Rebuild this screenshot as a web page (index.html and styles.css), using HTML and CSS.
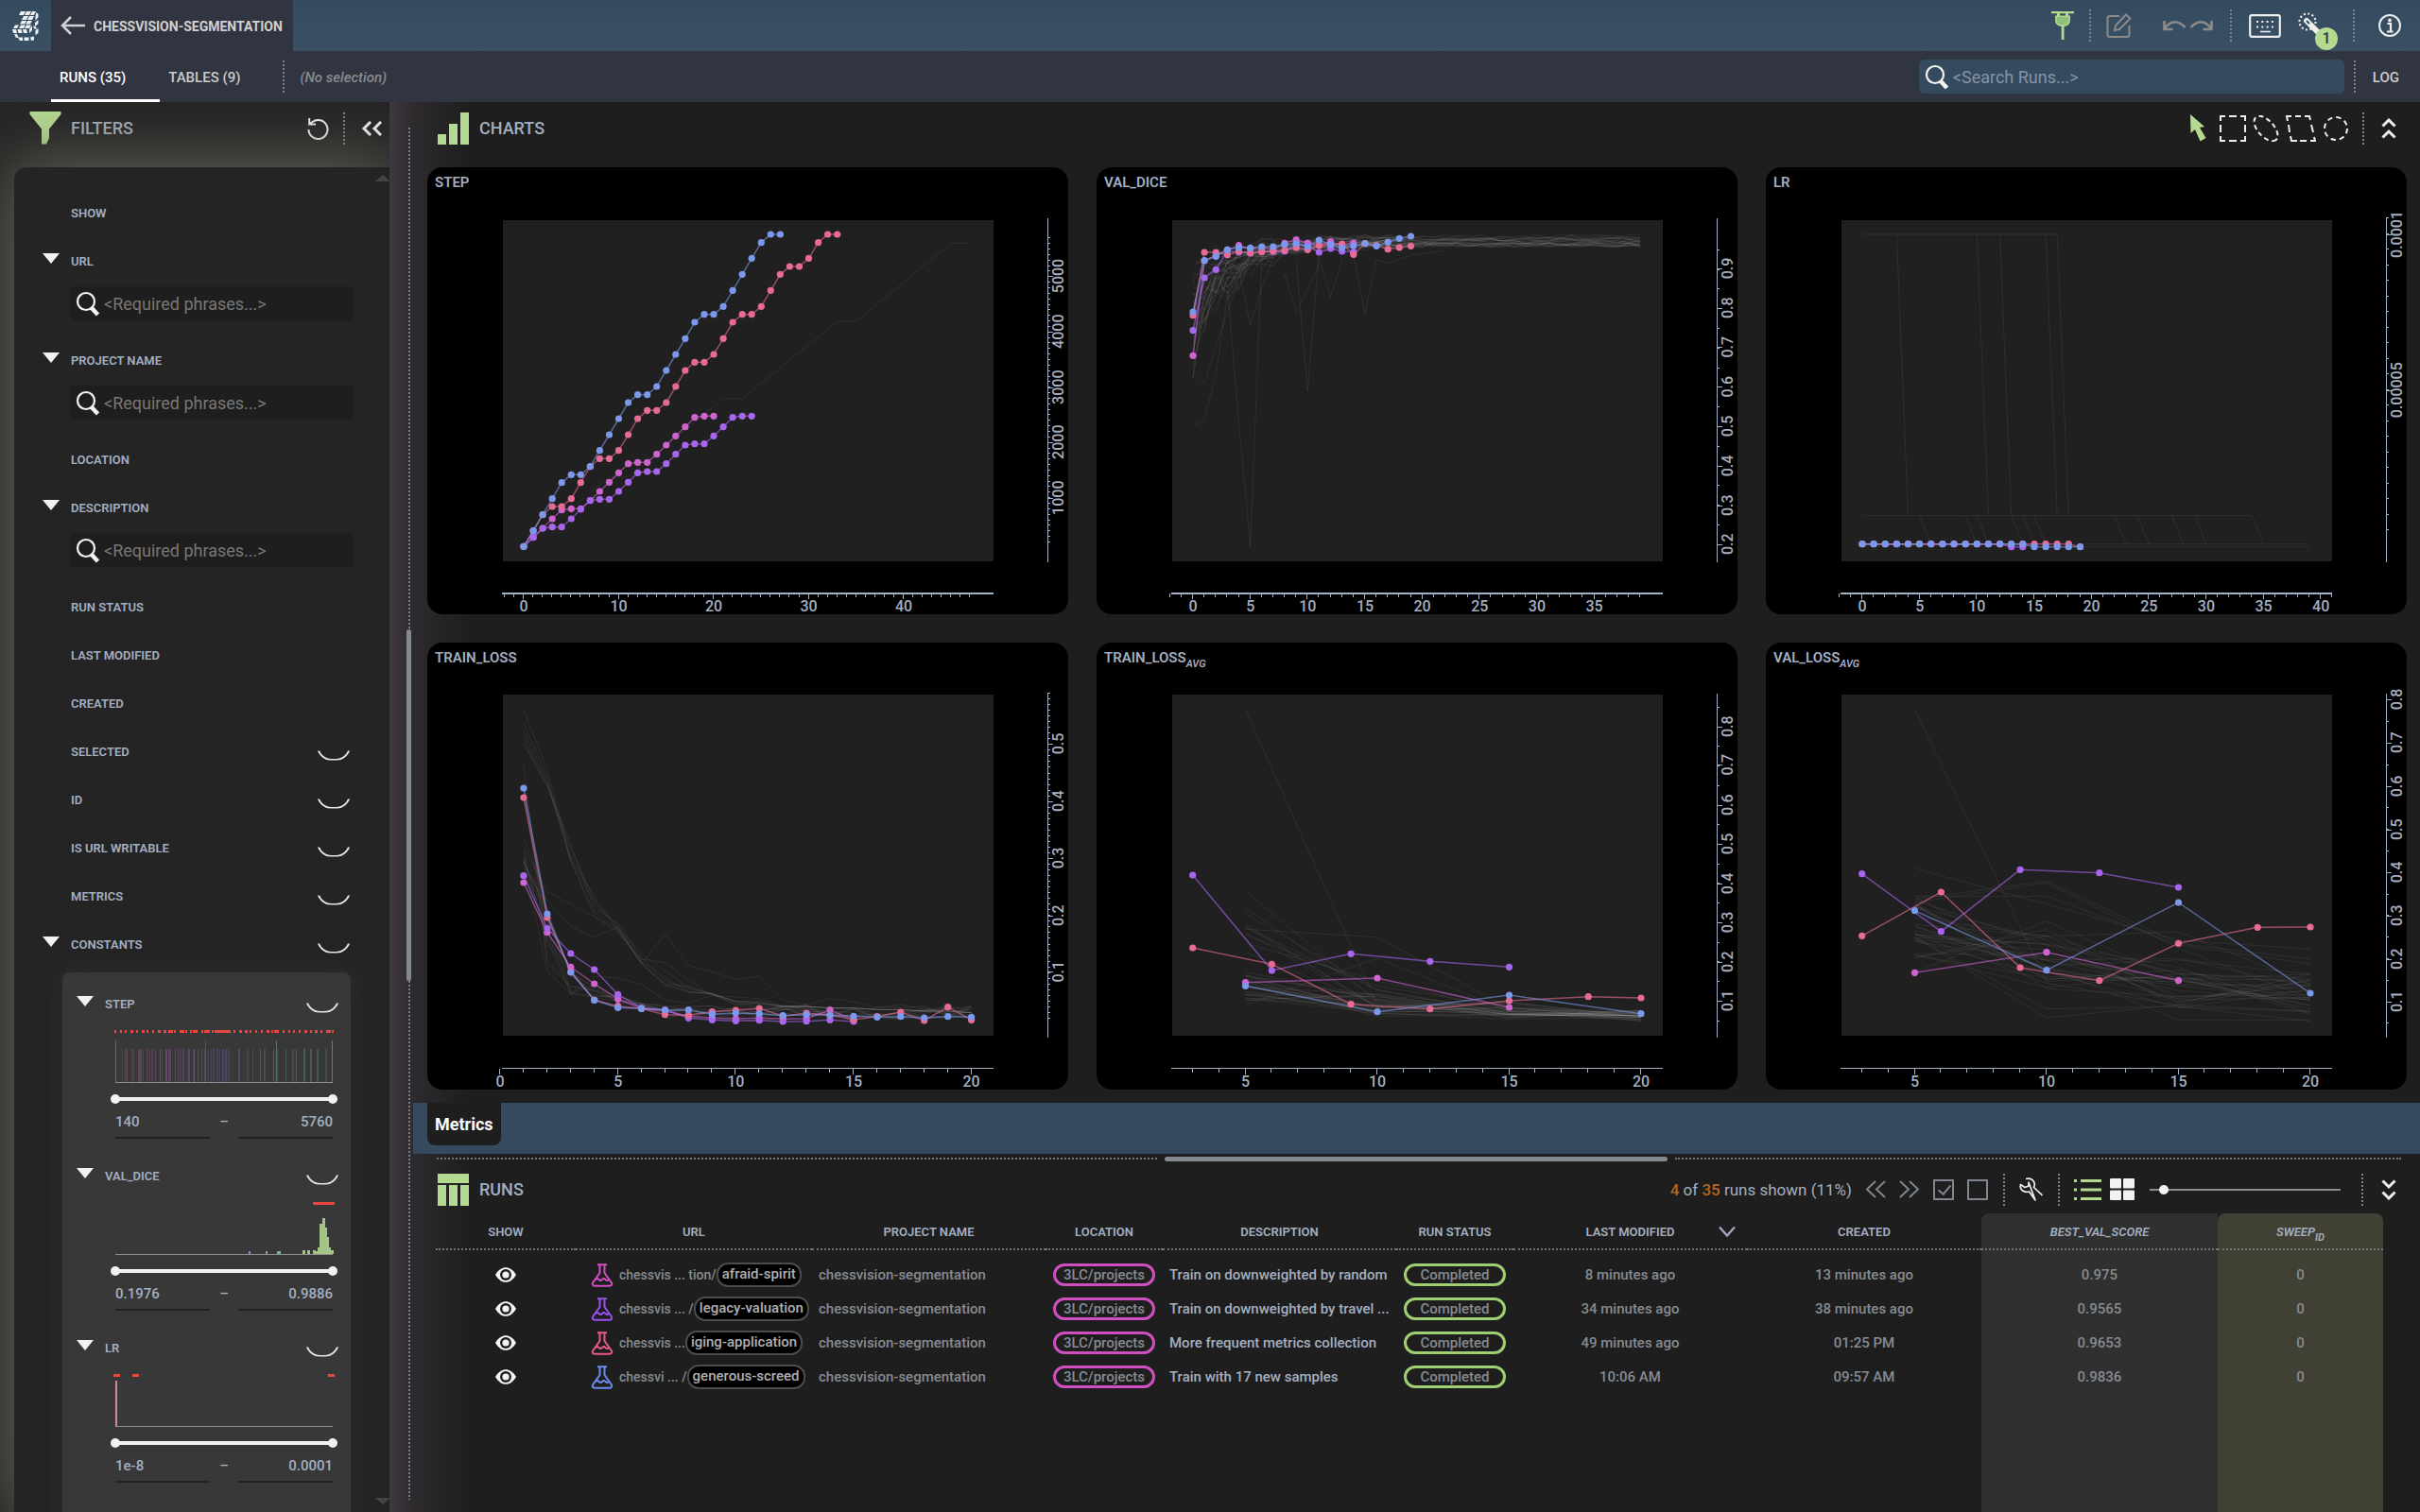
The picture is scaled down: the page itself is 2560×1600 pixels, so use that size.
FILE: index.html
```html
<!DOCTYPE html>
<html lang="en">
<head>
<meta charset="utf-8">
<title>chessvision-segmentation</title>
<link rel="stylesheet" href="styles.css">
</head>
<body>
<svg class="defs" aria-hidden="true">
  <symbol id="i-search" viewBox="0 0 26 27"><circle cx="11" cy="11" r="9" fill="none" stroke="currentColor" stroke-width="2.200"/><path d="M17 18l6.500 7" stroke="currentColor" stroke-width="4.500"/></symbol>
  <symbol id="i-eye" viewBox="0 0 24 18"><path d="M1 9C4.500 3 8.500 1.200 12 1.200S19.500 3 23 9c-3.500 6-7.500 7.800-11 7.800S4.500 15 1 9z" fill="#f4f4f4"/><circle cx="12" cy="9" r="6" fill="#1e1e1e"/><circle cx="12" cy="9" r="3.600" fill="#f4f4f4"/></symbol>
  <symbol id="i-flask" viewBox="0 0 24 25"><path d="M7 1.200h10M9.500 1v9L2 20.500Q1 23.500 4 23.800h16q3-.3 2-3.300L14.500 10V1M5 17q1.700-1.800 3.500 0t3.500 0t3.500 0t3.500 0" fill="none" stroke="currentColor" stroke-width="2"/></symbol>
</svg>

<header class="topbar">
  <a class="logo" href="#" aria-label="Home">
    <svg width="28" height="31" viewBox="0 0 28 31" fill="#eef1f4">
      <path d="M9 0h5l-2 4H7zM15 0h5l-2 4h-5zM21 0h4l-2 4h-4zM12 5h5l-2 4h-5zM18 5h5l-2 4h-5zM10 10h5l-2 3.500H8zM16 10h5l-2 3.500h-5zM3 14.500h4L5 18H1zM9 14.500h5L12 18H7zM15 14.500h5L18 18h-5zM0 19h4l1 4H1zM5.500 19h4l1 4h-4zM11 19h4l1 4h-4zM25.500 1l2 2v3l-3 4V5zM24 12l3.500-3v4L24 16zM18 19l3-4v5l-3 3zM2 24l3 0 1.500 4H4zM6 27.500h5V31H8zM12.500 27.500h5V31h-5zM19 27.500l4-1v4L20 31zM24.500 20l3-2v5l-3 2zM22.500 15l3 2v2l-3-1z"/>
    </svg>
  </a>
  <a class="project-tab" href="#">
    <svg width="26" height="20" viewBox="0 0 26 20" fill="none" stroke="#d0d0d0" stroke-width="2.600"><path d="M26 10H2M11 1L2 10l9 9"/></svg>
    <span>CHESSVISION-SEGMENTATION</span>
  </a>
  <div class="top-actions">
    <button class="icon" aria-label="Connection"><svg width="24" height="31" viewBox="0 0 24 31" fill="#b4d990"><path d="M0 0h24v2.200H0zM6 2h3v3H6zM15 2h3v3h-3zM4 4.500h16V9q0 6-6.500 7v14h-2.800V16Q4 15 4 9z"/><path d="M5.500 6h13v3q0 5-6.500 5.500Q5.500 14 5.500 9z" fill="#8fc07a"/></svg></button>
    <span class="sep"></span>
    <button class="icon" aria-label="Edit"><svg width="27" height="27" viewBox="0 0 27 27" fill="none" stroke="#8b8b8b" stroke-width="2"><path d="M14 3H4Q1.500 3 1.500 5.500v17Q1.500 25 4 25h18q2.500 0 2.500-2.500V13M9 18l1-5L21 1.500l4.500 4L14 17z"/></svg></button>
    <span class="pair">
      <button class="icon" aria-label="Undo"><svg width="25" height="14" viewBox="0 0 25 14" fill="none" stroke="#8b8b8b" stroke-width="2.600"><path d="M1.500 2v9h9M2 10Q12-3 23.500 9"/></svg></button>
      <button class="icon" aria-label="Redo"><svg width="25" height="14" viewBox="0 0 25 14" fill="none" stroke="#8b8b8b" stroke-width="2.600"><path d="M23.500 2v9h-9M23 10Q13-3 1.500 9"/></svg></button>
    </span>
    <span class="sep"></span>
    <button class="icon keys" aria-label="Keyboard"><svg width="34" height="25" viewBox="0 0 34 25"><rect x="1.200" y="1.200" width="31.600" height="22.600" rx="2" fill="none" stroke="#eee" stroke-width="2.200"/><path d="M8 8h18M8 13.500h18" stroke="#eee" stroke-width="2" stroke-dasharray="2 3.300"/><path d="M12 18.500h11" stroke="#eee" stroke-width="1.600"/></svg></button>
    <button class="icon wand" aria-label="Notices">
      <svg width="28" height="28" viewBox="0 0 28 28"><circle cx="10" cy="10" r="8.500" fill="none" stroke="#eee" stroke-width="2.200" stroke-dasharray="2 2.450"/><path d="M9 9l15 15" stroke="#eee" stroke-width="6" stroke-linecap="round"/><path d="M9.500 9.500l2 2" stroke="#3b5064" stroke-width="2" stroke-linecap="round"/></svg>
      <span class="badge">1</span>
    </button>
    <span class="sep"></span>
    <button class="icon info" aria-label="Info"><svg width="26" height="26" viewBox="0 0 26 26"><circle cx="13" cy="13" r="11" fill="none" stroke="#eee" stroke-width="2"/><circle cx="13" cy="7.500" r="1.900" fill="#eee"/><path d="M10.500 11h3.500v8M10 19.500h6.500" fill="none" stroke="#eee" stroke-width="2.200"/></svg></button>
  </div>
</header>

<nav class="subbar">
  <a class="tab active" href="#">RUNS (35)</a>
  <a class="tab" href="#">TABLES (9)</a>
  <span class="sep"></span>
  <em class="no-selection">(No selection)</em>
  <label class="search search-runs"><svg width="26" height="27"><use href="#i-search"/></svg><input type="text" placeholder="&lt;Search Runs...&gt;" aria-label="Search runs"></label>
  <span class="sep"></span>
  <a class="log" href="#">LOG</a>
</nav>

<div class="workspace">
  <aside class="filters">
    <div class="head">
      <svg width="34" height="35" viewBox="0 0 34 35"><path d="M.5 0h33v3L21 18.500V28l-3 6.500h-5v-16L.5 3z" fill="#b4d990"/></svg>
      <h2>FILTERS</h2>
      <button class="icon push" aria-label="Reset filters"><svg width="24" height="24" viewBox="0 0 24 24" fill="none" stroke="#eee" stroke-width="2"><path d="M1.500 13a10 10 0 1 0 4-8L2.500 7M2.200 1v6.500H9"/></svg></button>
      <span class="sep"></span>
      <button class="icon" aria-label="Collapse filters"><svg width="22" height="16" viewBox="0 0 22 16" fill="none" stroke="#eee" stroke-width="3"><path d="M10 1L3 8l7 7M21 1l-7 7 7 7"/></svg></button>
    </div>
    <div class="panel">
      <span class="scroll-up"></span><span class="scroll-down"></span>
      <div class="row">SHOW</div>
      <div class="row open">URL</div>
      <label class="search"><svg width="26" height="27"><use href="#i-search"/></svg><input type="text" placeholder="&lt;Required phrases...&gt;" aria-label="URL phrases"></label>
      <div class="row open">PROJECT NAME</div>
      <label class="search"><svg width="26" height="27"><use href="#i-search"/></svg><input type="text" placeholder="&lt;Required phrases...&gt;" aria-label="Project name phrases"></label>
      <div class="row">LOCATION</div>
      <div class="row open">DESCRIPTION</div>
      <label class="search"><svg width="26" height="27"><use href="#i-search"/></svg><input type="text" placeholder="&lt;Required phrases...&gt;" aria-label="Description phrases"></label>
      <div class="row">RUN STATUS</div>
      <div class="row">LAST MODIFIED</div>
      <div class="row">CREATED</div>
      <div class="row hid">SELECTED</div>
      <div class="row hid">ID</div>
      <div class="row hid">IS URL WRITABLE</div>
      <div class="row hid">METRICS</div>
      <div class="row open hid">CONSTANTS</div>
      <div class="constants">
        <section>
          <div class="row open hid">STEP</div>
          <svg class="hist" id="hist-step" viewBox="0 0 230 60"></svg>
          <div class="range"><input type="range" min="140" max="5760" value="140" aria-label="Step from"><input type="range" min="140" max="5760" value="5760" aria-label="Step to"></div>
          <div class="limits"><input type="text" value="140" aria-label="Step minimum"><span>–</span><input type="text" value="5760" aria-label="Step maximum"></div>
        </section>
        <section>
          <div class="row open hid">VAL_DICE</div>
          <svg class="hist" id="hist-dice" viewBox="0 0 230 60"></svg>
          <div class="range"><input type="range" min="0" max="1" step="any" value="0" aria-label="Dice from"><input type="range" min="0" max="1" step="any" value="1" aria-label="Dice to"></div>
          <div class="limits"><input type="text" value="0.1976" aria-label="Dice minimum"><span>–</span><input type="text" value="0.9886" aria-label="Dice maximum"></div>
        </section>
        <section>
          <div class="row open hid">LR</div>
          <svg class="hist" id="hist-lr" viewBox="0 0 230 60"></svg>
          <div class="range"><input type="range" min="0" max="1" step="any" value="0" aria-label="LR from"><input type="range" min="0" max="1" step="any" value="1" aria-label="LR to"></div>
          <div class="limits"><input type="text" value="1e-8" aria-label="LR minimum"><span>–</span><input type="text" value="0.0001" aria-label="LR maximum"></div>
        </section>
        <section><div class="row open"></div></section>
      </div>
    </div>
  </aside>

  <div class="splitter-v"><span class="grip"></span></div>

  <main class="content">
    <div class="head">
      <svg width="33" height="34" viewBox="0 0 33 34" fill="#b4d990"><path d="M0 23h9v11H0zM12 12h9v22h-9zM24 0h9v34h-9z"/></svg>
      <h2>CHARTS</h2>
      <div class="tools push">
        <button class="icon pointer" aria-label="Pointer"><svg width="20" height="29" viewBox="0 0 20 29"><path d="M1 0l15 13-5 1 6.500 11-6 3.500L6 16l-4.500 4z" fill="#b4d990"/></svg></button>
        <button class="icon" aria-label="Rectangle select"><svg width="28" height="28" viewBox="0 0 28 28" fill="none" stroke="#eee" stroke-width="2"><path d="M1 6V1h5M22 1h5v5M27 22v5h-5M6 27H1v-5M10 1h8M10 27h8M1 10v8M27 10v8"/></svg></button>
        <button class="icon" aria-label="Lasso select"><svg width="28" height="28" viewBox="0 0 28 28" fill="none" stroke="#eee" stroke-width="2" stroke-dasharray="5 3.500"><ellipse cx="14" cy="14" rx="16" ry="8.500" transform="rotate(48 14 14)"/></svg></button>
        <button class="icon" aria-label="Polygon select"><svg width="32" height="28" viewBox="0 0 32 28" fill="none" stroke="#eee" stroke-width="2"><path d="M2 6L1 1h5M20 1h5l1 4M30 23l1 4h-5M12 27H6l-1-5M10 1h6M15 27h7M3 10l1 8M27 10l2 8"/></svg></button>
        <button class="icon" aria-label="Circle select"><svg width="28" height="28" viewBox="0 0 28 28" fill="none" stroke="#eee" stroke-width="2"><circle cx="14" cy="14" r="12" stroke-dasharray="5.400 4"/></svg></button>
        <span class="sep"></span>
        <button class="icon fold" aria-label="Collapse charts"><svg width="16" height="22" viewBox="0 0 16 22" fill="none" stroke="#eee" stroke-width="3"><path d="M1.500 8.500L8 2l6.500 6.500M1.500 20.500L8 14l6.500 6.500"/></svg></button>
      </div>
    </div>

    <div class="charts">
      <article class="chart"><h3>STEP</h3><svg viewBox="0 34 678 439" data-chart="step"></svg></article>
      <article class="chart"><h3>VAL_DICE</h3><svg viewBox="0 34 678 439" data-chart="dice"></svg></article>
      <article class="chart"><h3>LR</h3><svg viewBox="0 34 678 439" data-chart="lr"></svg></article>
      <article class="chart"><h3>TRAIN_LOSS</h3><svg viewBox="0 34 678 439" data-chart="train"></svg></article>
      <article class="chart"><h3>TRAIN_LOSS<sub>AVG</sub></h3><svg viewBox="0 34 678 439" data-chart="trainAvg"></svg></article>
      <article class="chart"><h3>VAL_LOSS<sub>AVG</sub></h3><svg viewBox="0 34 678 439" data-chart="valAvg"></svg></article>
    </div>

    <div class="sheets"><button class="sheet">Metrics</button></div>
    <div class="splitter-h"><span class="grip"></span></div>

    <div class="head runs-head">
      <svg width="33" height="34" viewBox="0 0 33 34" fill="#b4d990"><path d="M0 0h33v10H0zM0 12h9v22H0zM12 12h9v22h-9zM24 12h9v22h-9z"/></svg>
      <h2>RUNS</h2>
      <div class="runs-tools push">
        <span class="count"><b>4</b> of <b>35</b> runs shown (11%)</span>
        <button class="icon" aria-label="Previous"><svg width="22" height="19" viewBox="0 0 22 19" fill="none" stroke="#7f868f" stroke-width="2"><path d="M11 1L2 9.500 11 18M21 1l-9 8.500 9 8.500"/></svg></button>
        <button class="icon" aria-label="Next"><svg width="22" height="19" viewBox="0 0 22 19" fill="none" stroke="#7f868f" stroke-width="2"><path d="M1 1l9 8.500L1 18M11 1l9 8.500L11 18"/></svg></button>
        <input class="box" type="checkbox" checked aria-label="Select all">
        <input class="box" type="checkbox" aria-label="Select none">
        <span class="sep"></span>
        <button class="icon" aria-label="Settings"><svg width="25" height="25" viewBox="0 0 25 25" fill="none" stroke="#eee" stroke-width="1.700" stroke-linejoin="round"><path d="M7 1.500q6-1.500 8.500 3 1.500 3 0 6l9 8.500M17 24l-6.500-9q-4.500 1-7.500-1.500Q.5 11 1.500 7.500l4.500 3 4-1.500V5z"/></svg></button>
        <span class="sep"></span>
        <span class="views">
          <button class="icon" aria-label="List view"><svg width="29" height="24" viewBox="0 0 29 24" fill="#b4d990"><path d="M0 1h3v3H0zM7 1h22v3H7zM0 10.500h3v3H0zM7 10.500h22v3H7zM0 20h3v3H0zM7 20h22v3H7z"/></svg></button>
          <button class="icon" aria-label="Grid view"><svg width="26" height="23" viewBox="0 0 26 23" fill="#f2f2f2"><rect width="12" height="10.500" rx="1"/><rect x="14" width="12" height="10.500" rx="1"/><rect y="12.500" width="12" height="10.500" rx="1"/><rect x="14" y="12.500" width="12" height="10.500" rx="1"/></svg></button>
        </span>
        <input class="zoom" type="range" min="0" max="100" value="5" aria-label="Row size">
        <span class="sep"></span>
        <button class="icon fold" aria-label="Collapse runs"><svg width="16" height="22" viewBox="0 0 16 22" fill="none" stroke="#eee" stroke-width="3"><path d="M1.500 1.500L8 8l6.500-6.500M1.500 13.500L8 20l6.500-6.500"/></svg></button>
      </div>
    </div>

    <div class="table-wrap">
      <table class="runs">
        <colgroup><col class="w148"><col class="w250"><col class="w247"><col class="w124"><col class="w247"><col class="w124"><col class="w247"><col class="w248"><col class="w250"><col class="w175"></colgroup>
        <thead><tr>
          <th>SHOW</th><th>URL</th><th>PROJECT NAME</th><th>LOCATION</th><th>DESCRIPTION</th><th>RUN STATUS</th>
          <th class="sorted">LAST MODIFIED<svg width="18" height="13" viewBox="0 0 18 13" fill="none" stroke="#a3afc0" stroke-width="2.200"><path d="M1 1.500l8 9 8-9"/></svg></th>
          <th>CREATED</th><th class="score">BEST_VAL_SCORE</th><th class="sweep">SWEEP<sub>ID</sub></th>
        </tr></thead>
        <tbody>
          <tr class="space"><td colspan="8"></td><td class="score"></td><td class="sweep"></td></tr>
          <tr><td><button class="icon" aria-label="Hide run"><svg width="24" height="18"><use href="#i-eye"/></svg></button></td>
            <td><div class="url"><svg class="flask c-magenta" width="24" height="25"><use href="#i-flask"/></svg><span>chessvis ... tion/</span><a class="name" href="#">afraid-spirit</a></div></td>
            <td class="left">chessvision-segmentation</td><td><span class="pill loc">3LC/projects</span></td><td class="left desc">Train on downweighted by random</td><td><span class="pill done">Completed</span></td><td>8 minutes ago</td><td>13 minutes ago</td><td class="score">0.975</td><td class="sweep">0</td></tr>
          <tr><td><button class="icon" aria-label="Hide run"><svg width="24" height="18"><use href="#i-eye"/></svg></button></td>
            <td><div class="url"><svg class="flask c-violet" width="24" height="25"><use href="#i-flask"/></svg><span>chessvis ... /</span><a class="name" href="#">legacy-valuation</a></div></td>
            <td class="left">chessvision-segmentation</td><td><span class="pill loc">3LC/projects</span></td><td class="left desc">Train on downweighted by travel ...</td><td><span class="pill done">Completed</span></td><td>34 minutes ago</td><td>38 minutes ago</td><td class="score">0.9565</td><td class="sweep">0</td></tr>
          <tr><td><button class="icon" aria-label="Hide run"><svg width="24" height="18"><use href="#i-eye"/></svg></button></td>
            <td><div class="url"><svg class="flask c-pink" width="24" height="25"><use href="#i-flask"/></svg><span>chessvis ...</span><a class="name" href="#">iging-application</a></div></td>
            <td class="left">chessvision-segmentation</td><td><span class="pill loc">3LC/projects</span></td><td class="left desc">More frequent metrics collection</td><td><span class="pill done">Completed</span></td><td>49 minutes ago</td><td>01:25 PM</td><td class="score">0.9653</td><td class="sweep">0</td></tr>
          <tr><td><button class="icon" aria-label="Hide run"><svg width="24" height="18"><use href="#i-eye"/></svg></button></td>
            <td><div class="url"><svg class="flask c-blue" width="24" height="25"><use href="#i-flask"/></svg><span>chessvi ... /</span><a class="name" href="#">generous-screed</a></div></td>
            <td class="left">chessvision-segmentation</td><td><span class="pill loc">3LC/projects</span></td><td class="left desc">Train with 17 new samples</td><td><span class="pill done">Completed</span></td><td>10:06 AM</td><td>09:57 AM</td><td class="score">0.9836</td><td class="sweep">0</td></tr>
          <tr class="fill"><td colspan="8"></td><td class="score"></td><td class="sweep"></td></tr>
        </tbody>
      </table>
    </div>
  </main>
</div>
<script src="charts.js"></script>
</body>
</html>
```
FILE: styles.css
```css
* { box-sizing: border-box; }
body {
  margin: 0;
  height: 100vh;
  display: flex;
  flex-direction: column;
  overflow: hidden;
  background: #1e1e1e;
  color: #a3afc0;
  font: 500 15px/20px Roboto, "Liberation Sans", sans-serif;
}
.defs { position: absolute; width: 0; height: 0; }
a { color: inherit; text-decoration: none; }
button, input { font: inherit; color: inherit; }
svg { display: block; flex: none; }
.icon { display: block; flex: none; padding: 0; border: 0; background: none; }
.push { margin-left: auto; }
.sep { flex: none; height: 34px; border-left: 2px dotted #7b828b; }

.topbar {
  flex: none;
  display: flex;
  height: 54px;
  background: linear-gradient(#344a5f, #3a5063);
}
.logo { width: 54px; display: grid; place-items: center; }
.project-tab {
  display: flex;
  align-items: center;
  gap: 9px;
  padding: 0 11px 0 10px;
  background: #303541;
  color: #d0d0d0;
  font-size: 14px;
  font-weight: 700;
}
.project-tab span { padding-top: 2px; }
.top-actions { margin-left: auto; display: flex; align-items: center; gap: 16px; padding-right: 19px; }
.pair { display: flex; gap: 3px; padding: 0 2px 0 17px; }
.keys { margin: 0 2px; }
.wand { position: relative; width: 42px; }
.badge {
  position: absolute;
  right: 0;
  top: 16px;
  width: 24px;
  height: 24px;
  border-radius: 12px;
  background: #b4d990;
  color: #303541;
  font-size: 16px;
  line-height: 24px;
}
.info { margin-left: 8px; }

.subbar { flex: none; display: flex; align-items: center; height: 54px; padding: 0 22px 0 54px; background: #303541; }
.tab { display: flex; align-items: center; height: 54px; padding: 5px 36px 0 9px; color: #ccc; border-bottom: 3px solid transparent; }
.tab + .tab { padding-right: 45px; }
.tab.active { color: #fff; border-color: #fff; }
.no-selection { margin-left: 16px; padding-top: 2px; color: #8b8b8b; }

.search {
  display: flex;
  align-items: center;
  gap: 4px;
  height: 36px;
  padding-left: 6px;
  border-radius: 6px;
  background: #1e1e1e;
  color: #f4f4f4;
}
.search input { flex: 1; min-width: 0; border: 0; padding: 2px 0 0; background: none; font-size: 18px; font-weight: 400; outline: 0; }
.search input::placeholder { color: #777; opacity: 1; }
.search-runs { width: 450px; margin: 0 10px 0 auto; background: #354a5f; }
.search-runs input::placeholder { color: #8394a6; }
.log { margin-left: 18px; padding-top: 2px; color: #ccc; }

.workspace { flex: 1; min-height: 0; display: flex; background: #1e1e1e; }
h2 { margin: 0; font-size: 18px; font-weight: 500; line-height: 24px; }
.head { flex: none; display: flex; align-items: center; height: 69px; gap: 11px; }

.filters { flex: none; width: 412px; display: flex; flex-direction: column; overflow: hidden; background: #252525; }
.filters .head { padding: 0 8px 14px 31px; gap: 10px; }
.filters .head .sep { margin: 0 7px 0 4px; }
.panel {
  position: relative;
  flex: 1;
  min-height: 0;
  margin-left: 15px;
  padding: 23px 37px 0 30px;
  border-radius: 14px 0 0 0;
  background: #242424;
  box-shadow: 0 0 70px 4px #66665a;
}
.scroll-up, .scroll-down { position: absolute; right: -1px; border: 8px solid transparent; }
.scroll-up { top: 0; border-bottom: 7px solid #454545; }
.scroll-down { bottom: 0; border-top: 7px solid #454545; }
.row {
  display: flex;
  align-items: center;
  height: 51px;
  padding-left: 30px;
  font-size: 13px;
  font-weight: 600;
}
.row.open::before {
  content: "";
  width: 18px;
  height: 11px;
  margin: 0 12px 6px -30px;
  background: #f2f2f2;
  clip-path: polygon(0 0, 100% 0, 50% 100%);
}
.row.hid::after {
  content: "";
  width: 32px;
  height: 32px;
  margin: -18px 4px 0 auto;
  border-radius: 16px;
  border: 2px solid #e4e4e4;
  clip-path: inset(26px 0 0 0);
}
.panel > .search { margin: 1px 0 17px 29px; }
.constants { margin: 4px 4px 0 21px; height: 700px; padding: 8px 16px 0 15px; border-radius: 8px; background: #383838; box-shadow: 0 0 24px #2a3036; }
.constants .row.hid::after { margin-right: -4px; }
.constants section { padding-bottom: 14px; }
.hist { width: 230px; height: 60px; margin-left: 41px; overflow: visible; }
.range { position: relative; height: 30px; margin: 0 -2px 0 36px; }
.range::before { content: ""; position: absolute; left: 6px; right: 6px; top: 13px; height: 4px; background: #f2f2f2; }
.range input { position: absolute; inset: 0; width: 100%; height: 30px; margin: 0; appearance: none; background: none; pointer-events: none; }
.range input::-webkit-slider-thumb { appearance: none; width: 10px; height: 10px; border-radius: 5px; background: #f2f2f2; pointer-events: auto; }
.limits { display: flex; justify-content: space-between; height: 27px; margin: 0 3px 0 41px; line-height: 18px; }
.limits input { width: 100px; padding: 0 0 8px; border: 0; border-bottom: 2px solid #222; background: none; font-size: 15px; outline: 0; }
.limits input:last-child { text-align: right; }

.splitter-v {
  flex: none;
  display: flex;
  flex-direction: column;
  align-items: flex-start;
  width: 25px;
  padding: 27px 0 13px 18px;
  background: linear-gradient(90deg, #40383f, #2d2a2e);
}
.splitter-v::before, .splitter-v::after { content: ""; flex: 532 1 0; width: 5px; background: repeating-linear-gradient(#7c7c82 0 2px, transparent 2px 4px) 2px 0 / 2px 100% no-repeat; }
.splitter-v::after { flex-grow: 550; }
.splitter-v .grip { flex: 373 1 0; width: 5px; border-radius: 3px; background: #84898f; }

.content { flex: 1; min-width: 0; display: flex; flex-direction: column; background: linear-gradient(90deg, #2d2a2e, #1e1e1e 60px); }
.content > .head { padding: 0 25px 14px 26px; }
.tools { display: flex; align-items: center; gap: 7px; }
.tools .sep { margin: 0 7px; }
.pointer { margin-right: 5px; }
.charts { flex: none; display: grid; grid-template-columns: repeat(3, 1fr); gap: 30px; padding: 0 14px 14px 15px; }
.chart { min-width: 0; border-radius: 16px; background: #000; }
.chart h3 { margin: 0; height: 34px; padding: 6px 0 0 8px; font-size: 15px; font-weight: 600; line-height: 20px; }
.chart sub, .runs sub { font-size: 11px; font-style: italic; line-height: 0; vertical-align: -5px; }
.chart svg { width: 100%; }
.chart text { fill: #a3afc0; font-size: 16px; text-anchor: middle; }
.plot { fill: #202020; }
.axis { fill: none; stroke: #a3b1c4; }
.axis-bold { stroke-width: 2; }
.ghost { fill: none; stroke: #fff; stroke-opacity: .065; }
.trace { fill: none; stroke-width: 1.5; stroke-opacity: .6; }

.sheets { flex: none; height: 54px; padding-left: 15px; background: #354a5f; }
.sheet { display: block; height: 45px; padding: 0 8px; border: 0; border-radius: 0 0 8px 8px; background: #1e1e1e; color: #fff; font-size: 18px; font-weight: 700; }
.splitter-h { flex: none; display: flex; height: 12px; padding: 2px 20px 4px 25px; gap: 8px; align-items: center; }
.splitter-h::before, .splitter-h::after { content: ""; flex: 759 1 0; border-top: 2px dotted #77777c; }
.splitter-h::after { flex-grow: 765; }
.splitter-h .grip { flex: 531 1 0; height: 5px; border-radius: 3px; background: #84898f; }
.content > .runs-head { height: 51px; padding-bottom: 0; }
.runs-tools { display: flex; align-items: center; gap: 14px; }
.count { font-size: 17px; font-weight: 400; }
.count b { color: #b5651d; font-weight: 500; }
.box { appearance: none; flex: none; width: 22px; height: 22px; margin: 0; border: 2px solid #7f868f; }
.box:checked::before { content: ""; display: block; width: 6px; height: 11px; margin: 1px 0 0 6px; border: solid #7f868f; border-width: 0 2px 2px 0; transform: rotate(40deg); }
.runs-tools .sep { margin: 0 1px 0 2px; }
.views { display: flex; align-items: center; gap: 9px; }
.zoom { appearance: none; width: 202px; height: 20px; margin: 0 6px 0 2px; background: linear-gradient(#8c8c8c, #8c8c8c) center / 100% 2px no-repeat; }
.zoom::-webkit-slider-thumb { appearance: none; width: 10px; height: 10px; border-radius: 5px; background: #f4f4f4; }
.fold { margin-left: 4px; }

.table-wrap { flex: 1; min-height: 0; padding: 0 39px 0 24px; }
.runs { width: 100%; height: 100%; table-layout: fixed; border-collapse: collapse; color: #868b92; }
.w148 { width: 148px; } .w250 { width: 250px; } .w247 { width: 247px; } .w124 { width: 124px; } .w248 { width: 248px; } .w175 { width: 175px; }
.runs th { height: 38px; padding: 2px 0 0; border-bottom: 2px dotted #6f7276; color: #a3afc0; font-size: 13px; font-weight: 600; }
.runs td { height: 36px; padding: 0; text-align: center; white-space: nowrap; }
.runs td .icon { margin: 0 auto; }
.runs .left { text-align: left; padding-left: 7px; }
.runs .desc { color: #a3afc0; }
.runs .space td { height: 9px; }
.runs .fill td { height: auto; }
.runs .score { background: #303030; }
.runs .sweep { background: #404034; }
.runs th.score { border-radius: 8px 0 0 0; font-style: italic; }
.runs th.sweep { border-radius: 8px 8px 0 0; font-style: italic; }
.sorted { position: relative; }
.sorted svg { position: absolute; right: 12px; top: 13px; }
.url { display: flex; align-items: center; padding-left: 16px; overflow: hidden; }
.url span { font-size: 14px; }
.flask { margin-right: 6px; }
.c-magenta { color: #cf4fc0; } .c-violet { color: #9b51f0; } .c-pink { color: #e75a83; } .c-blue { color: #6a8cf0; }
.name { height: 26px; padding: 0 4px; border: 2px solid #4c4c4c; border-radius: 12px; background: #000; color: #b0b0b0; line-height: 21px; }
.pill { display: block; width: 108px; height: 24px; margin: 0 auto; border: 3px solid; border-radius: 12px; line-height: 19px; }
.pill.loc { border-color: #cf4fc0; }
.pill.done { border-color: #a0ce72; }
```
FILE: charts.js
```js
const BLUE = '#7b99ec', PINK = '#e76b95', MAGENTA = '#cf63d0', VIOLET = '#a865ee';
const NS = 'http://www.w3.org/2000/svg';

let seed = 7;
const rnd = () => (seed = (seed * 16807) % 2147483647) / 2147483647;

const add = (svg, tag, attrs, text) => {
  const el = document.createElementNS(NS, tag);
  for (const k in attrs) el.setAttribute(k, attrs[k]);
  if (text !== undefined) el.textContent = text;
  svg.appendChild(el);
};
const run = (ys, from = 0) => ys.map((y, i) => [from + i, y]);
const flat = (from, to, y) => Array.from({ length: to - from + 1 }, (_, i) => [from + i, y]);

// Noisy background runs. Heights are in thirds of a pixel, as in the series below.
function diceGhosts() {
  const out = [
    [[0, 843], [1, 823], [2, 680], [3, 430], [4, 350], [6, 300]],
    [[3, 400], [4, 830], [5, 1225], [6, 300]],
    [[9, 320], [10, 733], [11, 290]],
    [[14, 300], [15, 485], [16, 315], [17, 325], [19, 300], [22, 285]],
    [[4, 340], [5, 523], [6, 400], [7, 310]],
    [[11, 310], [12, 433], [13, 315]],
    [[8, 360], [9, 480], [10, 410], [11, 330]],
    [[0, 690], [1, 420], [2, 370]], [[0, 670], [1, 705], [2, 590], [3, 480], [4, 380]],
  ];
  for (let k = 0; k < 32; k++) {
    const start = 350 + rnd() * 320, base = 236 + rnd() * 34, len = k < 24 ? 39 : 18, line = [];
    for (let x = 0; x <= len; x++) {
      const decay = Math.exp(-x / 3);
      const y = base + (start - base) * decay * (0.5 + rnd() * 0.7) + (rnd() - 0.3) * 90 * Math.exp(-x / 8) + (rnd() - 0.5) * 14;
      line.push([x, Math.max(235, y)]);
    }
    out.push(line);
  }
  return out;
}
function trainGhosts() {
  const out = [
    run([650, 850, 930, 965, 933, 1050, 955, 1055, 1075, 1100, 1090, 1165, 1180, 1160, 1170, 1190, 1180, 1195, 1195, 1205], 1),
    run([680, 822, 860, 900, 950, 1035, 1045, 1100, 1150, 1180, 1190, 1195, 1200], 1),
    run([720, 1075, 1145, 1090, 1095, 1115, 1165, 1175, 1150, 1155, 1160, 1185, 1195, 1200, 1205], 1),
  ];
  [243, 285, 310, 330, 345, 350].forEach(s => out.push(run([s, s + 190 - (s - 243) / 2, 670 + rnd() * 60, 810 + rnd() * 90, 920 + rnd() * 50, 1010 + rnd() * 50, 1070 + rnd() * 50, 1120 + rnd() * 20, 1145, 1160 + rnd() * 20, 1165 + rnd() * 25, 1185, 1185, 1190, 1190, 1195, 1195, 1200, 1200, 1205], 1)));
  [415, 470, 480, 700, 710, 720, 725, 730, 740, 690].forEach(s => out.push(run([s, 860 + rnd() * 220, 1060 + rnd() * 90, 1110 + rnd() * 50, 1150 + rnd() * 30, 1165 + rnd() * 30].concat(Array.from({ length: 14 }, () => 1180 + rnd() * 45)), 1)));
  return out;
}
function trainAvgGhosts() {
  const out = [[[5, 243], [10, 1180], [15, 1200], [20, 1215]], [[5, 940], [10, 965], [15, 1190], [20, 1200]], [[5, 1180], [10, 1032], [15, 1200], [20, 1215]]];
  [817, 872, 890, 922, 930, 935, 950, 958, 985, 1012].forEach(s => out.push([[5, s], [10, 1100 + rnd() * 90], [15, 1170 + rnd() * 40], [20, 1200 + rnd() * 30]]));
  for (let k = 0; k < 22; k++) out.push([[5, 1075 + rnd() * 115], [10, 1140 + rnd() * 80], [15, 1185 + rnd() * 40], [20, 1195 + rnd() * 38]]);
  return out;
}
function valAvgGhosts() {
  const out = [
    [[5, 243], [10, 1105], [15, 1090], [20, 1165]], [[5, 747], [10, 860], [15, 975], [20, 1003]],
    [[5, 845], [10, 787], [15, 985], [20, 1035]], [[5, 855], [10, 793], [15, 1000], [20, 1160]],
    [[5, 835], [10, 835], [15, 990], [20, 1050]], [[5, 1075], [10, 914], [15, 1100], [20, 1180]],
    [[5, 965], [10, 1221], [15, 1180], [20, 1200]], [[5, 965], [10, 1193], [15, 1185], [20, 1232]],
    [[5, 930], [10, 1060], [15, 1228], [20, 1228]], [[5, 925], [10, 962], [15, 948], [20, 1115]],
  ];
  for (let k = 0; k < 24; k++) out.push([[5, 820 + rnd() * 225], [10, 940 + rnd() * 200], [15, 1030 + rnd() * 160], [20, 1080 + rnd() * 130]]);
  return out;
}

const charts = {
  step: {
    x0: 102, dx: 10.05, top: 7, xTicks: [-2, 47, 10], yStep: 17.540, yTop: 244, yEnd: 1215,
    yLabels: [[1000, 1070], [2000, 893], [3000, 719], [4000, 542], [5000, 366]],
    ghosts: [[[0, 1225], [9, 1005], [11, 1005], [21, 756], [23, 756], [33, 510], [35, 510], [45, 262], [47, 262]]],
    series: [
      [MAGENTA, run([1225, 1196, 1167, 1137, 1109, 1105, 1105, 1079, 1050, 1021, 991, 962, 958, 958, 932, 903, 874, 845, 815, 811, 811])],
      [VIOLET, run([1225, 1196, 1167, 1163, 1163, 1137, 1107, 1079, 1075, 1075, 1050, 1021, 991, 987, 987, 962, 932, 903, 899, 899, 874, 845, 815, 811, 811])],
      [PINK, run([1225, 1175, 1124, 1098, 1098, 1073, 1022, 971, 946, 946, 920, 870, 819, 793, 793, 768, 717, 666, 640, 640, 615, 565, 513, 488, 488, 463, 412, 361, 336, 336, 310, 260, 234, 234])],
      [BLUE, run([1225, 1175, 1124, 1073, 1022, 997, 997, 971, 920, 870, 819, 768, 743, 743, 717, 666, 615, 565, 513, 488, 488, 463, 412, 361, 310, 260, 234, 234])],
    ],
  },
  dice: {
    x0: 102, dx: 12.13, top: 7, xTicks: [-2, 39, 5], yStep: 62.400, yTop: 281, yEnd: 1217,
    yLabels: [['0.2', 1217], ['0.3', 1094], ['0.4', 969], ['0.5', 843], ['0.6', 718], ['0.7', 592], ['0.8', 467], ['0.9', 342]],
    ghosts: diceGhosts(),
    series: [
      [MAGENTA, run([619, 318, 300, 283, 269, 280, 276, 283, 262, 251, 261, 268, 257, 270, 261])],
      [VIOLET, run([539, 372, 346, 286, 291, 294, 288, 289, 288, 263, 270, 291, 279, 288, 290])],
      [PINK, run([491, 291, 291, 299, 288, 293, 290, 287, 285, 276, 283, 270, 266, 264, 298, 263, 269, 281, 276, 271])],
      [BLUE, run([480, 317, 304, 283, 276, 277, 273, 273, 266, 263, 273, 252, 266, 277, 270, 263, 271, 259, 247, 240])],
    ],
  },
  lr: {
    x0: 102, dx: 12.13, top: 7, xTicks: [-2, 41, 5], yStep: 49.500, yTop: 181, yEnd: 1172,
    yLabels: [['0.0001', 234], ['0.00005', 728]],
    ghosts: [[[0, 234], [17, 234], [18, 1127]], [[3, 234], [4, 1127]], [[10, 234], [11, 1127]], [[12, 234], [13, 1127]], [[16, 234], [17, 1127]],
      [[0, 1127], [34, 1127], [35, 1217]], [[19, 1217], [39, 1217]], [[19, 1226], [39, 1226]],
      ...[5, 9, 10, 13, 14, 15, 22, 24, 27, 29].map(x => [[x, 1127], [x + 1, 1217]])],
    series: [
      [VIOLET, flat(0, 12, 1217).concat(flat(13, 14, 1226))],
      [PINK, flat(0, 18, 1217).concat([[19, 1226]])],
      [BLUE, flat(0, 14, 1217).concat(flat(15, 19, 1226))],
    ],
  },
  train: {
    x0: 77, dx: 24.93, top: 10, xTicks: [0, 20, 5], yStep: 18.100, yTop: 189, yEnd: 1225,
    yLabels: [['0.1', 1075], ['0.2', 896], ['0.3', 714], ['0.4', 533], ['0.5', 351]],
    ghosts: trainGhosts(),
    series: [
      [MAGENTA, run([792, 950, 1060, 1113, 1162, 1192, 1199, 1216, 1222, 1224, 1222, 1225, 1224, 1196, 1228], 1)],
      [VIOLET, run([770, 937, 1017, 1068, 1147, 1190, 1196, 1222, 1228, 1231, 1229, 1233, 1232, 1228, 1233], 1)],
      [PINK, run([522, 903, 1074, 1165, 1184, 1192, 1211, 1213, 1202, 1197, 1191, 1216, 1206, 1212, 1227, 1217, 1203, 1230, 1187, 1228], 1)],
      [BLUE, run([492, 891, 1077, 1165, 1189, 1192, 1197, 1196, 1210, 1206, 1208, 1214, 1211, 1213, 1216, 1219, 1217, 1221, 1217, 1219], 1)],
    ],
  },
  trainAvg: {
    x0: 18, dx: 27.9, top: 10, xTicks: [3, 20, 5], yStep: 62.150, yTop: 234, yEnd: 1229,
    yLabels: [['0.1', 1167], ['0.2', 1043], ['0.3', 918], ['0.4', 795], ['0.5', 669], ['0.6', 545], ['0.7', 418], ['0.8', 296]],
    ghosts: trainAvgGhosts(),
    series: [
      [MAGENTA, [[5, 1109], [10, 1095], [15, 1188]]],
      [VIOLET, [[3, 768], [6, 1071], [9, 1018], [12, 1042], [15, 1060]]],
      [PINK, [[3, 999], [6, 1051], [9, 1178], [12, 1193], [15, 1167], [18, 1154], [20, 1158]]],
      [BLUE, [[5, 1120], [10, 1202], [15, 1149], [20, 1208]]],
    ],
  },
  valAvg: {
    x0: 18, dx: 27.9, top: 10, xTicks: [3, 20, 5], yStep: 68.400, yTop: 211, yEnd: 1238,
    yLabels: [['0.1', 1169], ['0.2', 1034], ['0.3', 896], ['0.4', 759], ['0.5', 623], ['0.6', 486], ['0.7', 347], ['0.8', 210]],
    ghosts: valAvgGhosts(),
    series: [
      [MAGENTA, [[5, 1078], [10, 1013], [15, 1103]]],
      [VIOLET, [[3, 764], [6, 947], [9, 751], [12, 761], [15, 807]]],
      [PINK, [[3, 961], [6, 822], [9, 1062], [12, 1103], [15, 985], [18, 934], [20, 933]]],
      [BLUE, [[5, 881], [10, 1070], [15, 855], [20, 1143]]],
    ],
  },
};

document.querySelectorAll('[data-chart]').forEach(svg => {
  const c = charts[svg.dataset.chart];
  const lower = c.top > 7;
  const bottom = lower ? 450.5 : 451;
  const X = x => Math.round((c.x0 + c.dx * x) * 10) / 10;
  const Y = y => Math.round((y / 3 - c.top) * 10) / 10;
  const path = pts => 'M' + pts.map(([x, y]) => X(x) + ' ' + Y(y)).join('L');
  add(svg, 'rect', { class: 'plot', x: 80, y: lower ? 55 : 56, width: 519, height: 361 });
  c.ghosts.forEach(g => add(svg, 'path', { class: 'ghost', d: path(g) }));
  c.series.forEach(([color, pts]) => add(svg, 'path', { class: 'trace', stroke: color, d: path(pts) }));
  c.series.forEach(([color, pts]) => pts.forEach(([x, y]) => add(svg, 'circle', { cx: X(x), cy: Y(y), r: 3.6, fill: color })));
  add(svg, 'path', { class: lower ? 'axis' : 'axis axis-bold', d: `M79 ${bottom}H599` });
  let d = 'M656.5 54V418';
  const [a, b, major] = c.xTicks;
  for (let x = a; x <= b; x++) d += `M${Math.round(X(x)) - 0.5} 451v${x % major ? 4 : 6}`;
  for (let y = c.yTop; y <= c.yEnd; y += c.yStep) d += `M656 ${Math.round(Y(y)) + 0.5}h3`;
  c.yLabels.forEach(([, y]) => d += `M656 ${Math.round(Y(y)) + 0.5}h6`);
  add(svg, 'path', { class: 'axis', d });
  for (let x = Math.ceil(a / major) * major; x <= b; x += major) if (x >= 0) add(svg, 'text', { x: X(x), y: 470 }, x);
  c.yLabels.forEach(([t, y]) => add(svg, 'text', { transform: `translate(673 ${Y(y)}) rotate(-90)` }, t));
});

// Filter histograms
const base = svg => add(svg, 'path', { d: 'M0 57.5H230', stroke: '#8c8c8c' });
const step = document.getElementById('hist-step');
for (let k = 0; k < 50; k++) {
  const x = Math.round(k < 36 ? 6 + k * 3.2 + rnd() * 3 : 128 + (k - 36) * 7 + rnd() * 4);
  add(step, 'rect', { x, y: 22, width: 1 + Math.round(rnd()), height: 35, fill: `hsl(${345 - x * 0.9} 28% 50%)`, opacity: 0.2 + rnd() * 0.25 });
}
[[0, '#b08a8a', 13], [95, '#7a6fb0', 13], [170, '#7aa89a', 13], [229, '#b0b09a', 13]].forEach(([x, fill, y]) => add(step, 'rect', { x, y, width: 1, height: 57 - y, fill, opacity: 0.5 }));
for (let x = -1; x < 230; x += 5.74) add(step, 'rect', { x: Math.round(x), y: 2, width: rnd() > 0.7 ? 3 : 2, height: 3, fill: '#e8483f' });
[51, 58, 70, 82, 94, 96, 105, 110, 113, 116, 119, 168, 225].forEach(x => add(step, 'rect', { x, y: 2, width: 3, height: 3, fill: '#e8483f' }));
base(step);
const dice = document.getElementById('hist-dice');
add(dice, 'rect', { x: 209, y: 2, width: 23, height: 3, rx: 1, fill: '#e8483f' });
[[209, 4], [211, 3], [214, 7], [216, 32], [219, 38], [221, 28], [223, 18], [225, 7], [228, 4], [198, 4], [203, 4]].forEach(([x, h]) => add(dice, 'rect', { x, y: 57 - h, width: 3, height: h, fill: '#a5c487' }));
[[141, '#7f93c8'], [159, '#7fa8b8'], [171, '#7fb0a8'], [173, '#7fb0a8']].forEach(([x, fill]) => add(dice, 'rect', { x, y: 54, width: 2, height: 3, fill }));
base(dice);
const lr = document.getElementById('hist-lr');
[[-2, 7], [18, 7], [225, 7]].forEach(([x, width]) => add(lr, 'rect', { x, y: 2, width, height: 3, fill: '#e8483f' }));
add(lr, 'rect', { x: 0, y: 9, width: 2, height: 48, fill: '#cf8a92' });
base(lr);
```
